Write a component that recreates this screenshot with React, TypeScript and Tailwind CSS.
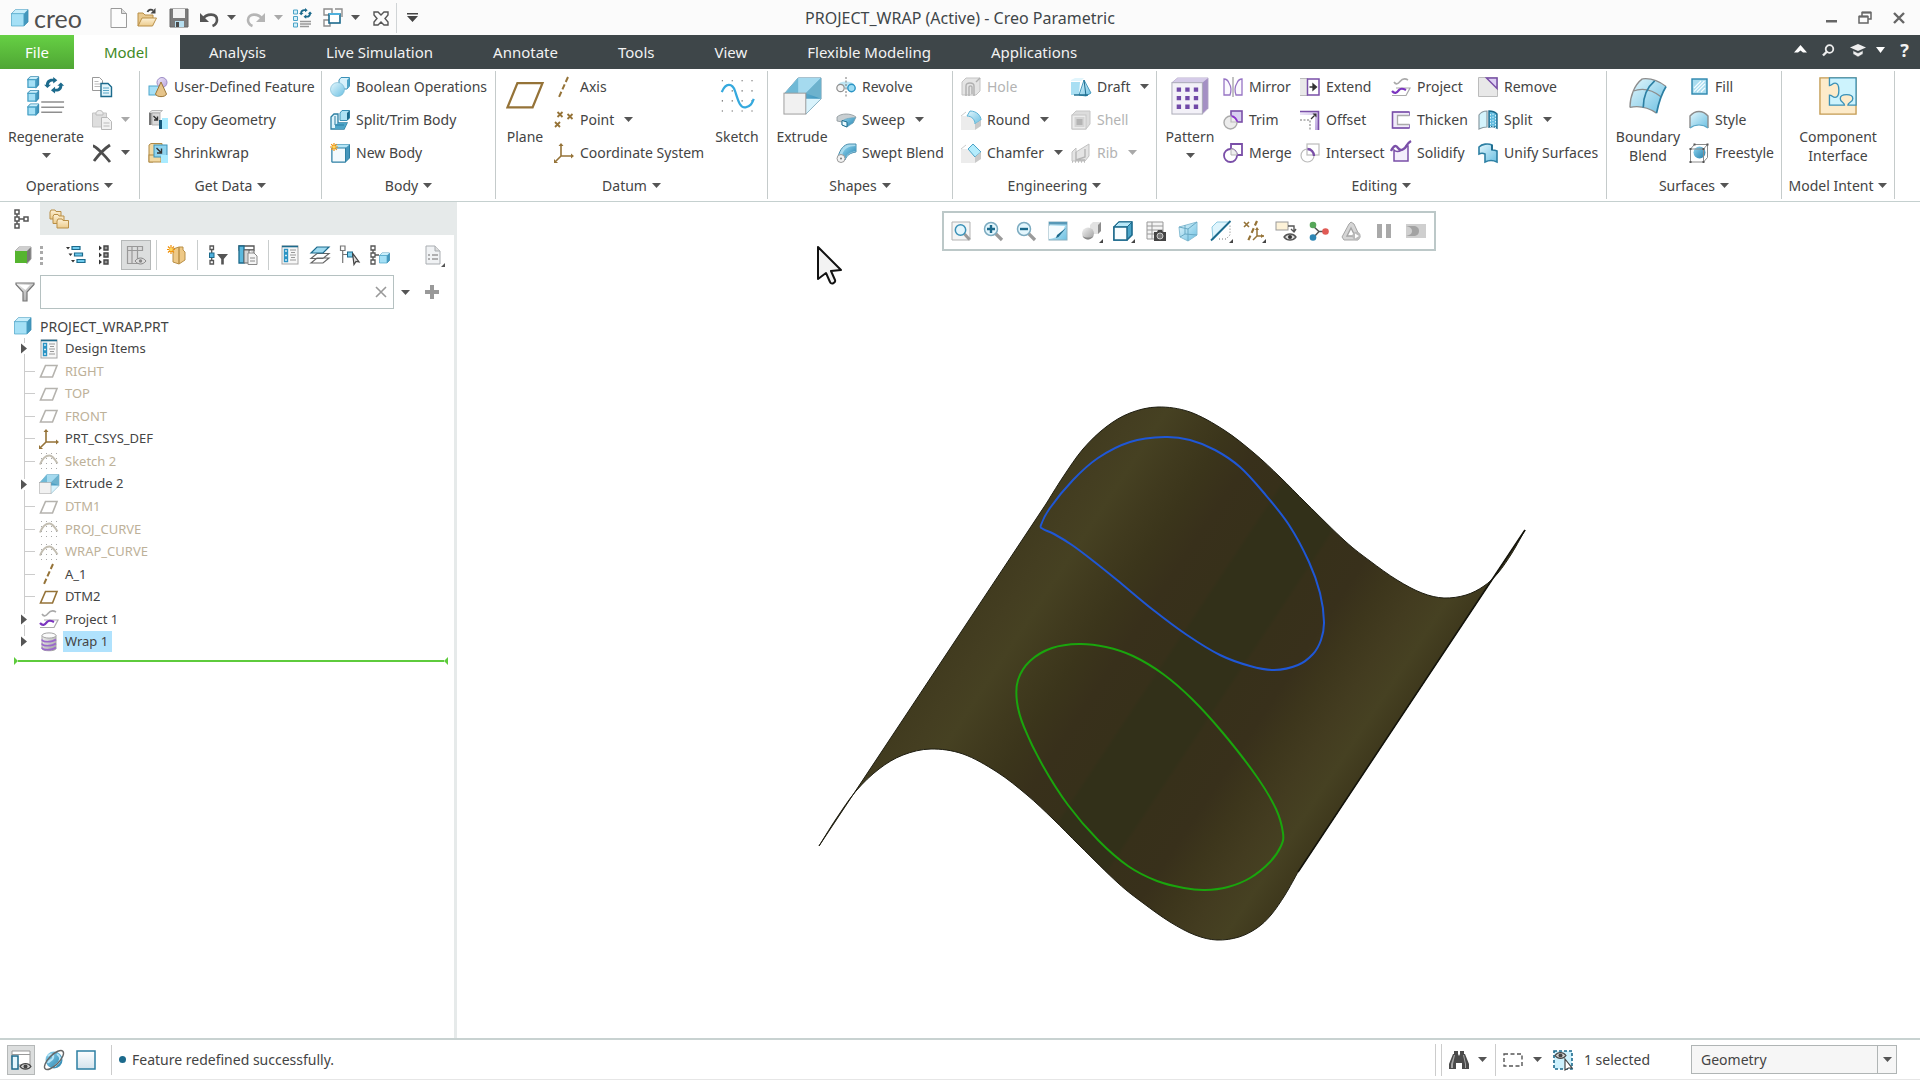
import type { ReactNode } from "react";

type Point = [number, number];

// Catmull-Rom spline through the points, written out as cubic segments
function smooth(points: Point[], closed = false) {
  const n = points.length;
  const at = (i: number) =>
    closed ? points[(i + n) % n] : points[Math.max(0, Math.min(n - 1, i))];
  let d = `M${points[0][0]} ${points[0][1]}`;
  const last = closed ? n : n - 1;
  for (let i = 0; i < last; i++) {
    const [p0, p1, p2, p3] = [at(i - 1), at(i), at(i + 1), at(i + 2)];
    d += `C${p1[0] + (p2[0] - p0[0]) / 6} ${p1[1] + (p2[1] - p0[1]) / 6} ${p2[0] - (p3[0] - p1[0]) / 6} ${p2[1] - (p3[1] - p1[1]) / 6} ${p2[0]} ${p2[1]}`;
  }
  return closed ? d + "Z" : d;
}

// the extruded profile, and the same profile at the far end of the extrusion
const nearEdge: Point[] = [
  [819, 846], [836, 819], [856, 791], [879, 769], [903, 755], [931, 749], [963, 754], [997, 772],
  [1027, 795], [1053, 819], [1080, 846], [1118, 883], [1143, 903], [1170, 922], [1195, 935],
  [1217, 940], [1239, 937], [1257, 928], [1271, 915], [1285, 895], [1298, 872],
];
const farEdge = nearEdge.map(([x, y]): Point => [x + 227, y - 342]);
const surface = smooth(farEdge) + smooth([...nearEdge].reverse()).replace("M", "L") + "Z";

const projectedCurve: Point[] = [
  [1041, 525], [1050, 508], [1073, 480], [1098, 458], [1130, 442], [1165, 437], [1190, 440],
  [1215, 450], [1240, 467], [1264, 493], [1289, 525], [1309, 562], [1320, 593], [1324, 622],
  [1321, 640], [1313, 654], [1298, 665], [1274, 670], [1250, 666], [1220, 655], [1187, 635],
  [1152, 609], [1117, 580], [1092, 560], [1072, 545], [1054, 534], [1043, 529],
];

const wrappedCurve: Point[] = [
  [1079, 644], [1052, 648], [1030, 661], [1018, 680], [1017, 702], [1024, 727], [1043, 766],
  [1068, 805], [1098, 840], [1128, 866], [1157, 881], [1184, 888], [1205, 890], [1228, 887],
  [1250, 878], [1270, 862], [1281, 846], [1283, 833], [1276, 809], [1257, 777], [1223, 733],
  [1192, 699], [1163, 674], [1133, 656], [1106, 647],
];

/* ---------- icons ---------- */

const teal = "#1c6a8c";
const gold = "#957338";
const purple = "#7a4fa8";

function Gradients() {
  return (
    <svg width="0" height="0" className="absolute" aria-hidden="true">
      <defs>
        <linearGradient id="blue" x1="0" y1="0" x2="1" y2="1">
          <stop offset="0" stopColor="#e4f7fd" />
          <stop offset="1" stopColor="#6cc0e2" />
        </linearGradient>
        <linearGradient id="deep" x1="0" y1="0" x2="1" y2="1">
          <stop offset="0" stopColor="#8fd6f2" />
          <stop offset="1" stopColor="#2580ab" />
        </linearGradient>
        <linearGradient id="gray" x1="0" y1="0" x2="1" y2="1">
          <stop offset="0" stopColor="#f4f4f4" />
          <stop offset="1" stopColor="#9d9d9d" />
        </linearGradient>
        <linearGradient id="violet" x1="0" y1="0" x2="1" y2="1">
          <stop offset="0" stopColor="#f1ebfa" />
          <stop offset="1" stopColor="#b9a3dc" />
        </linearGradient>
        <linearGradient id="tan" x1="0" y1="0" x2="0" y2="1">
          <stop offset="0" stopColor="#fdf1d6" />
          <stop offset="1" stopColor="#eccb8c" />
        </linearGradient>
        <linearGradient id="paper" x1="0" y1="0" x2="0" y2="1">
          <stop offset="0" stopColor="#fdfeff" />
          <stop offset="1" stopColor="#d3e3ec" />
        </linearGradient>
      </defs>
    </svg>
  );
}

function Cube({ x, y, s }: { x: number; y: number; s: number }) {
  const k = s / 4;
  return (
    <g strokeLinejoin="round">
      <path d={`M${x} ${y + k}l${k} ${-k}h${s - k}v${s - k}l${-k} ${k}z`} fill="#4397bd" stroke="#3b8db3" strokeWidth=".8" />
      <path d={`M${x} ${y + k}l${k} ${-k}h${s - k}l${-k} ${k}z`} fill="#c8eefb" />
      <rect x={x} y={y + k} width={s - k} height={s - k} fill="#a5e0f6" stroke="#4ba3c7" strokeWidth=".7" />
    </g>
  );
}

const cycle = (
  <g fill={teal}>
    <path d="M2 8.500C2 4.500 5 2 8.500 2H10V0l4.500 3.600L10 7.200V5H9C6.800 5 5.500 6.500 5.200 8.500H7.500L3.600 12 0 8.500z" />
    <path d="M20 9.500c0 4-3 6.500-6.500 6.500H12v2l-4.500-3.600L12 10.800V13h1c2.200 0 3.500-1.500 3.800-3.500h-2.300L18.400 6 22 9.500z" />
  </g>
);

const planeShape = (color: string) => (
  <path d="M6.500 4.500h11.500l-4.500 11.500H1.500z" fill="none" stroke={color} strokeWidth="1.600" />
);

const sketchFaded = (
  <>
    <path d="M1 13.500c3-7.500 7-9 9.500-9s5 3 8 8" fill="none" stroke="#c3beb2" strokeWidth="2" />
    <path d="M2 2.500h16M2 7.500h16M2 12.500h16M2 17.500h16" fill="none" stroke="#a9a9a9" strokeWidth="1" strokeDasharray="1 4" />
  </>
);

const extrudeShape = (
  <>
    <path d="M1 8.500L8 .500h12v11L12 19.500V8.500z" fill="url(#deep)" stroke="#5f8ea5" strokeWidth=".5" />
    <path d="M1 8.500L8 .500h12l-8 8z" fill="#a5daef" />
    <path d="M1 8.500L8 .500v8z" fill="#6fb9d6" />
    <path d="M12 8.500l8-8v11z" fill="#6db2cd" />
    <path d="M12 19.500l8-8h-8z" fill="#d9f3fc" />
    <rect x=".5" y="8.500" width="11.500" height="11" fill="#f1f1f1" stroke="#9b9b9b" strokeWidth=".5" />
  </>
);

const projectShape = (
  <>
    <path d="M3 5c2 3 4 2 6-.500s4-4 8-1.500" fill="none" stroke="#aaa" strokeWidth="1.600" />
    <path d="M5 11h14l-4 7.500H1" fill="none" stroke="#aaa" strokeWidth="1.200" />
    <path d="M1 14c3 3.500 5 1.500 7-1s5-1 7 0" fill="none" stroke="#7b35bf" strokeWidth="2.200" />
  </>
);

const csysShape = (
  <>
    <path d="M7 2v11h11M7 13l-5 5" fill="none" stroke={gold} strokeWidth="1.600" />
    <path d="M7 0l2.500 3h-5zM20 13l-3 2.500v-5zM0 20v-4l4 4z" fill={gold} />
  </>
);

const listShape = (
  <>
    <rect x="2" y="1" width="16" height="18" fill="#f7f7f7" stroke="#a5a5a5" />
    <path d="M2 1.500h16" stroke={teal} strokeWidth="1.600" />
    <path d="M4.500 4.500h3v3h-3zM4.500 9h3v3h-3zM4.500 13.500h3v3h-3z" fill="#fff" stroke="#2b94c4" strokeWidth="1.400" />
    <path d="M10 5h6M11 7.500h4M10 10h6M11 12.500h4M10 15h6" stroke="#999" strokeWidth="1" />
  </>
);

const icons: Record<string, ReactNode> = {
  new: (
    <>
      <path d="M2 .500h10.500l5 5v14H2z" fill="#fcfcfc" stroke="#9a9a9a" />
      <path d="M12.500.500v5h5" fill="#ddd" stroke="#9a9a9a" />
    </>
  ),
  open: (
    <>
      <path d="M1 18V5h5l2 2h8v4" fill="#e9c98e" stroke="#b98f47" />
      <path d="M1 18l4-8h14.500l-4 8z" fill="url(#tan)" stroke="#b98f47" />
      <path d="M10.500 4c1-2.500 4-3 5.500-1.500" fill="none" stroke="#444" strokeWidth="1.800" />
      <path d="M18.500 0v5.500h-5z" fill="#444" />
    </>
  ),
  save: (
    <>
      <path d="M1 1h18v18H1z" fill="#7b7b7b" stroke="#666" />
      <path d="M4 1h12v9H4z" fill="#f3f3f3" />
      <path d="M6 13h9v6H6z" fill="#b7dff0" />
      <path d="M7 14h3v5H7z" fill="#4b4b4b" />
    </>
  ),
  undo: (
    <>
      <path d="M4 11c3-5.500 14-6.500 14 1 0 3-2 5-4.500 6" fill="none" stroke="#555" strokeWidth="2.600" />
      <path d="M1 5v9h9z" fill="#555" />
    </>
  ),
  redo: (
    <>
      <path d="M16 11C13 5.500 2 4.500 2 12c0 3 2 5 4.500 6" fill="none" stroke="#b5b5b5" strokeWidth="2.600" />
      <path d="M19 5v9h-9z" fill="#b5b5b5" />
    </>
  ),
  regenSmall: (
    <>
      <path d="M1.500 2h4v4h-4zM1.500 8.500h4v4h-4zM1.500 15h4v4h-4z" fill="#d5f1fb" stroke="#4ba3c7" />
      <g transform="translate(7 0) scale(.6)">{cycle}</g>
      <path d="M8 13.500h11M8 16h11M8 18.500h9" stroke="#999" strokeWidth="1.300" />
    </>
  ),
  windows: (
    <>
      <path d="M1 1h8v6H1zM12 1h7v8M1 12h6v6H1z" fill="#fff" stroke="#8d8d8d" strokeWidth="1.400" />
      <rect x="6" y="6" width="11" height="9" fill="#fff" stroke={teal} strokeWidth="1.600" />
      <path d="M6 6h11" stroke="#4fb0dd" strokeWidth="2" />
    </>
  ),
  closeWin: (
    <path d="M3 4h4l3 3 3-3h4v3l-3 3.500 3 3.500v3h-4l-3-3-3 3H3v-3l3-3.500L3 7z" fill="none" stroke="#555" strokeWidth="1.400" />
  ),
  copy: (
    <>
      <path d="M.500.500h7l3 3v10H.500z" fill="#fff" stroke="#999" />
      <path d="M2.500 4.500h4M2.500 7h6M2.500 9.500h6" stroke="#bbb" />
      <path d="M9 6.500h7l3.500 3.500v9.500H9z" fill="#e3f5fb" stroke={teal} strokeWidth="1.400" />
      <path d="M11 11h6M11 13.500h6M11 16h6" stroke="#5aa6c6" />
    </>
  ),
  paste: (
    <>
      <path d="M.500 3h14v14H.500z" fill="#dedede" stroke="#c5c5c5" />
      <path d="M4 3.500c0-2 1.500-3 3.500-3s3.500 1 3.500 3v1.500H4z" fill="#ececec" stroke="#bbb" />
      <path d="M9.500 7.500h6l4 4v8h-10z" fill="#f2f2f2" stroke="#b8b8b8" />
      <path d="M11.500 13h6M11.500 16h6" stroke="#bbb" />
    </>
  ),
  delete: <path d="M1 3c3 0 13 11 17 16M2 18C5 14 12 6 18 2" fill="none" stroke="#4d4d4d" strokeWidth="2.800" />,
  udf: (
    <>
      <rect x="1" y="9" width="11" height="9" fill="#a6e0f7" stroke="#4fa6cb" />
      <circle cx="14" cy="5.500" r="5" fill="url(#violet)" stroke="#9c8cc6" />
      <path d="M13 5l5.500 12c-1 3.500-10 3.500-11 0z" fill="#e6c48a" stroke="#9b7637" />
    </>
  ),
  copyGeom: (
    <>
      <path d="M1 3l3-2.500h10.500l-3 2.500z" fill="#eee" stroke="#aaa" strokeWidth=".8" />
      <path d="M4 3h8v12H4z" fill="#d9d9d9" stroke="#a6a6a6" strokeWidth=".8" />
      <path d="M1 3h2.500v12H1z" fill="#777" />
      <path d="M5.500 6l4 4M9.500 6.500V10H6" stroke="#333" strokeWidth="1.400" fill="none" />
      <path d="M11 10h3v9h-3z" fill="#16587a" />
      <path d="M14 8h6v11h-6z" fill="#a9ebff" />
    </>
  ),
  shrinkwrap: (
    <>
      <path d="M1 2l2-1.500h11V3H7v14l-2 2H1z" fill="#f2d9a3" stroke="#b08a45" />
      <rect x="1" y="12" width="12" height="7" fill="#f2d9a3" stroke="#b08a45" />
      <rect x="6" y="2" width="13" height="12" fill="#8fd3ee" stroke="#3b91b7" />
      <path d="M8.500 5l4.500 4.500M13.500 5.500V10H9" stroke="#333" strokeWidth="1.400" fill="none" />
      <path d="M13 12h7v8h-7z" fill="#a9ebff" />
    </>
  ),
  boolean: (
    <>
      <path d="M9 3l2-2.500h8.500V9L17 12H9z" fill="#d6f1fb" stroke="#3b91b7" />
      <path d="M17 3l2.500-2.500V9L17 12z" fill="#4ea5c8" />
      <circle cx="7.500" cy="12.500" r="7" fill="url(#blue)" stroke="#6fb4cf" strokeWidth=".6" />
    </>
  ),
  splitBody: (
    <>
      <path d="M10 3l2-2.500h7.500V8L17 10.500h-7z" fill="#aee2f5" stroke="#3b91b7" />
      <path d="M17 3l2.500-2.500V8L17 10.500z" fill={teal} />
      <path d="M1 7l3-3h4v9h9l-3 6H1z" fill="#dff4fb" stroke="#2c7fa3" strokeWidth="1.300" />
      <path d="M5 15l3-2h9l-3 6H5z" fill="#4ea5c8" />
      <path d="M5 6v9h9" fill="none" stroke="#2c7fa3" />
    </>
  ),
  newBody: (
    <>
      <path d="M2 5l4-3.500h13.500V15L15.500 19H2z" fill="#4496bc" stroke="#2c7fa3" />
      <path d="M2 5l4-3.500h13.500L15.500 5z" fill="#b5e5f6" />
      <rect x="2" y="5" width="13.500" height="14" fill="#f3fafd" stroke="#2c7fa3" />
      <path d="M4 0v8M0 4h8M1.200 1.200l5.600 5.600M6.800 1.200L1.200 6.800" stroke="#f0920e" strokeWidth="1.200" />
      <circle cx="4" cy="4" r="1.600" fill="#ffd75a" />
    </>
  ),
  plane: planeShape(gold),
  planeFaded: planeShape("#b5b3ae"),
  axis: <path d="M14 0L5 20" stroke={gold} strokeWidth="2" strokeDasharray="5.500 2.600" />,
  point: (
    <path d="M3.500 2l5 5m0-5l-5 5M13.500 4l5 5m0-5l-5 5M1 12l5 5m0-5l-5 5" stroke={gold} strokeWidth="1.800" />
  ),
  csys: csysShape,
  revolve: (
    <>
      <ellipse cx="10" cy="8" rx="8" ry="3.500" fill="#bfe5f3" />
      <path d="M10 0v20" stroke="#777" strokeDasharray="2 1.500" />
      <circle cx="4.500" cy="11" r="3.700" fill="#f4f4f4" stroke="#8f8f8f" strokeWidth="1.200" />
      <circle cx="15.500" cy="11" r="3.700" fill="#9ddcf3" stroke="#2b94c4" strokeWidth="1.400" />
    </>
  ),
  sweep: (
    <>
      <path d="M1 7c4-4 14-4 19 0l-3 6h-5V9L6 12 1 11z" fill="#c9cfd2" stroke="#8b9599" strokeWidth=".8" />
      <path d="M6 11c4-3 9-3 13.500-3.500L17 13l-6 4-5-2z" fill="url(#deep)" stroke="#6aa3ba" strokeWidth=".6" />
      <path d="M6 10.500l5 1.500v5l-5-2z" fill="#eafaff" stroke={teal} />
    </>
  ),
  sweptBlend: (
    <>
      <path d="M2 14C4 6 8 1.500 13 1h7v8c-6 1-9 3-11 8z" fill="#a9dbee" stroke="#4b8fae" />
      <path d="M6 12c2-6 6-9 14-9v5c-6 1-9 3-11 8z" fill="url(#deep)" />
      <circle cx="5" cy="15.500" r="4" fill="#f2f2f2" stroke="#9a9a9a" />
      <circle cx="5" cy="15.500" r="1" fill="#777" />
    </>
  ),
  hole: (
    <>
      <path d="M1 5l4-4h14v13l-4 4H1z" fill="#e4e4e4" stroke="#c3c3c3" />
      <path d="M5 19V9c0-4 8-4 8 0v10M8 19v-9c0-1.500 3-1.500 3 0v7M15 5l4-4" fill="none" stroke="#b0b0b0" strokeWidth="1.400" />
    </>
  ),
  round: (
    <>
      <path d="M0 6h6c5 0 8 4 8 8v6H0z" fill="#ececec" />
      <path d="M0 6l5-4" stroke="#ccc" />
      <path d="M6 6l3-5c7 0 11 5 11 9l-6 4c0-4-3-8-8-8z" fill="url(#blue)" stroke="#5cb3d6" />
      <path d="M14 14l6-4v6l-6 4z" fill="#c9c9c9" />
    </>
  ),
  chamfer: (
    <>
      <path d="M0 6h6l8 8v6H0z" fill="#ececec" />
      <path d="M0 6l5-4" stroke="#ccc" />
      <path d="M7 6l5-5 8 8-6 5z" fill="#b4ecfc" stroke="#4ba3c7" />
      <path d="M14 14l6-5v7l-6 4z" fill="#c9c9c9" />
    </>
  ),
  draft: (
    <>
      <path d="M0 3l4-2h9l-3 3H0z" fill="#e1f5fc" />
      <path d="M0 5h9l-1 13H0z" fill="#a9dff3" />
      <path d="M8 18l5-15 7 13-5 3z" fill="url(#blue)" stroke="#4a9cbf" />
      <path d="M3 18h14" stroke={teal} strokeWidth="1.400" />
      <path d="M13 3l2 16" stroke={teal} />
    </>
  ),
  shell: (
    <>
      <path d="M1 5l4-4h14v13l-4 5H1z" fill="#dcdcdc" stroke="#c6c6c6" />
      <rect x="1" y="5" width="14" height="14" fill="#ececec" stroke="#c6c6c6" />
      <rect x="4.500" y="8" width="8" height="8" fill="#b4b4b4" stroke="#d4d4d4" strokeWidth="2" />
    </>
  ),
  rib: (
    <>
      <path d="M1 18V9l4-4v4l13-8v12l-4 5z" fill="#e4e4e4" stroke="#c1c1c1" />
      <path d="M5 9v8l9-3V6M5 17h9" fill="none" stroke="#b5b5b5" strokeWidth="1.400" />
      <path d="M1 19h14" stroke="#999" strokeDasharray="1 2" />
    </>
  ),
  mirror: (
    <>
      <path d="M10 0v20" stroke="#999" strokeWidth="1.200" />
      <path d="M1 2v16h6c1-3 1.500-8-1-12C5 3.500 3.500 2 1 2zM19 2v16h-6c-1-3-1.500-8 1-12 1-2.500 2.500-4 5-4z" fill="#fbf9fe" stroke="#9774c4" strokeWidth="1.300" />
    </>
  ),
  trim: (
    <>
      <rect x="8" y="1" width="11" height="11" fill="#d9cff0" stroke={purple} strokeWidth="1.600" />
      <circle cx="7.500" cy="12.500" r="6.500" fill="#ececec" stroke="#aaa" strokeWidth="1.400" />
      <path d="M8 6.200c3.500 0 6 3 6 5.800" fill="none" stroke="#8c30d0" strokeWidth="1.800" />
      <path d="M8 6v6h6" fill="none" stroke="#bbb" strokeWidth="1.200" />
    </>
  ),
  merge: (
    <>
      <path d="M8 6V1h11v11h-5" fill="none" stroke={purple} strokeWidth="1.800" />
      <circle cx="7.500" cy="12.500" r="6.500" fill="none" stroke={purple} strokeWidth="1.800" />
      <path d="M8 6v6h6c0-3-2.500-6-6-6z" fill="#eee" stroke="#b5b5b5" />
    </>
  ),
  intersect: (
    <>
      <rect x="7" y="1" width="12" height="11" fill="none" stroke="#bbb" strokeWidth="1.200" />
      <circle cx="7.500" cy="12.500" r="6.500" fill="none" stroke="#bbb" strokeWidth="1.200" />
      <path d="M7.500 6c3.500 0 6.500 3 6.500 7" fill="none" stroke={purple} strokeWidth="2.400" />
    </>
  ),
  extend: (
    <>
      <rect x="0" y="1" width="7" height="18" fill="#e9e9e9" />
      <path d="M0 1.500h8M0 18.500h8" stroke="#bbb" />
      <path d="M7.500 2h11.500v16H7.500z" fill="#fff" stroke={purple} strokeWidth="1.500" />
      <path d="M9.500 10h6M13 7l3.500 3-3.500 3z" stroke="#333" fill="#333" strokeWidth="1.300" />
    </>
  ),
  offset: (
    <>
      <path d="M0 1h19v19h-4V5H0z" fill="url(#violet)" />
      <path d="M0 1.500h18.500V20" fill="none" stroke={purple} strokeWidth="1.600" />
      <path d="M0 10h10v10" fill="none" stroke="#777" strokeDasharray="2 1.500" />
      <path d="M11 9l3.500-3.500" stroke="#333" strokeWidth="1.300" />
      <path d="M16.500 3.500v4l-4-4z" fill="#333" />
    </>
  ),
  project: projectShape,
  thicken: (
    <>
      <path d="M1.500 2h17v3.500h-12v9h12V18h-17z" fill="#f1ebfa" stroke="#9774c4" />
      <path d="M18.500 2h-17v16h17" fill="none" stroke={purple} strokeWidth="1.600" />
      <path d="M18.500 5.500h-12v9h12" fill="none" stroke="#aaa" strokeWidth="1.300" />
    </>
  ),
  solidify: (
    <>
      <path d="M3 7c3 3 6 1 8 0s3-4 6-4v15H3z" fill="#f3eefb" stroke={purple} strokeWidth="1.500" />
      <path d="M0 8c3-6 5-6 7-3s5 2 7 0 1-4 6-7" fill="none" stroke={purple} strokeWidth="2.400" />
    </>
  ),
  remove: (
    <>
      <path d="M.500.500h19v19H.500z" fill="#e8e8e8" stroke="#bcbcbc" />
      <path d="M8.500 1h10.500v10.500z" fill="#ddd0f3" stroke={purple} strokeWidth="1.500" />
    </>
  ),
  split: (
    <>
      <path d="M1 5c2-3 5-4 8-4v16c-3 0-6 1-8 2z" fill="#d4f4fd" stroke="#8a9ba3" strokeWidth="1.200" />
      <path d="M11 1c3 0 6 1 8 3v14c-2-1-5-2-8-1z" fill="#5fb9dd" stroke={teal} strokeWidth="1.400" />
      <path d="M12.500 4v13M15 3.500v14M17.500 5v13" stroke="#d4f4fd" strokeDasharray="1.500 1.500" />
    </>
  ),
  unify: (
    <>
      <path d="M1 4c3-3 9-4 13-2v5c2 0 3 0 5 1v11c-4-2-8-2-12 0v-8c-2-1-4-1-6 0z" fill="url(#blue)" stroke="#2c7fa3" strokeWidth="1.600" />
      <path d="M14 2v5" stroke={teal} strokeWidth="1.800" />
    </>
  ),
  fill: (
    <>
      <rect x="3" y="2" width="15" height="15" fill="#a9dcef" stroke="#2b85ad" strokeWidth="1.400" />
      <path d="M5 11l7-7M5 14.500L15.500 4M8 15l8-8M12 15l4-4" stroke="#f4fcff" strokeWidth="1.200" />
    </>
  ),
  style: (
    <>
      <path d="M1 6c5-6 13-6 18 0v12c-5-4-13-4-18 0z" fill="url(#blue)" />
      <path d="M1 18V6c5-6 13-6 18 0v12" fill="none" stroke="#8c8c8c" strokeWidth="1.400" />
      <path d="M1 18c5-4 13-4 18 0" fill="none" stroke="#5aa6c6" strokeWidth="1.200" />
    </>
  ),
  freestyle: (
    <>
      <circle cx="10.500" cy="9.500" r="6" fill="url(#deep)" />
      <path d="M1.500 6h13v13h-13zM1.500 6l4-4.500h13v13l-4 4.500M14.500 6l4-4.500" fill="none" stroke="#8b8b8b" />
      <path d="M.500 5h2v2h-2zM13.500 5h2v2h-2zM.500 18h2v2h-2zM13.500 18h2v2h-2zM4.500.500h2v2h-2zM17.500.500h2v2h-2z" fill="#555" />
    </>
  ),
  part: <Cube x={1.500} y={1.500} s={16.500} />,
  design: listShape,
  sketchFaded,
  extrudeSmall: extrudeShape,
  wrap: (
    <>
      <path d="M3 3.500v13c0 3 14 3 14 0v-13" fill="url(#gray)" stroke="#a5a5a5" />
      <ellipse cx="10" cy="3.500" rx="7" ry="2.600" fill="#fafafa" stroke="#a5a5a5" />
      <path d="M3 7.500c0 3 10 3 14 0M3 11.500c0 3 10 3 14 0M3 15.500c0 3 10 3 14 0" fill="none" stroke="#9a68cc" strokeWidth="1.700" />
    </>
  ),
  // model tree toolbar
  tree: (
    <path d="M5 1h4v4H5zM5 8h4v4H5zM5 15h4v4H5zM14 8h4v4h-4zM7 5v3M7 12v3M9 10h5" fill="none" stroke="#555" strokeWidth="1.500" />
  ),
  folders: (
    <g fill="url(#tan)" stroke="#b98f47">
      <path d="M1 3l1-2h4l1 1.500h5V10H1z" />
      <path d="M4 7.500l1-2h4L10 7h5v7.500H4z" />
      <path d="M8 12l1-2h4l1 1.500h5.500V19H8z" />
    </g>
  ),
  greenCube: (
    <>
      <path d="M2 6l4-4h12v12l-4 4.500z" fill="#777" stroke="#999" />
      <path d="M2 6l4-4h12l-4 4z" fill="#cfcfcf" />
      <rect x="2" y="6" width="12" height="12" fill="#55b42f" />
    </>
  ),
  levels: (
    <>
      <path d="M6 1.500h8v3H6zM8.500 8h8v3h-8zM11 14.500h8v3h-8z" fill="#6fcbee" stroke={teal} strokeWidth="1.200" />
      <path d="M0 2h4L2 4.500zM2.500 8.500h4l-2 2.500zM5 15h4l-2 2.500z" fill="#333" />
    </>
  ),
  flat: (
    <>
      <path d="M8 1h4v4H8zM8 8h4v4H8zM8 15h4v4H8z" fill="#999" stroke="#444" strokeWidth="1.400" />
      <path d="M3 .500L6 3 3 5.500zM3 7.500L6 10l-3 2.500zM3 14.500L6 17l-3 2.500z" fill="#333" />
    </>
  ),
  columns: (
    <>
      <path d="M1.500 1.500h15v4h-15zM1.500 5.500h4.500v13H1.500zM6 1.500v17h5.500v-17" fill="#dadada" stroke="#999" strokeWidth="1.200" />
      <path d="M9 16c3-4 8-4 11 0-3 4-8 4-11 0z" fill="#ddd" stroke="#888" />
      <circle cx="14.500" cy="16" r="1.700" fill="#888" />
    </>
  ),
  newFolder: (
    <>
      <path d="M6 4l6-2v17l-6-2zM12 2h4v3l2 2v8l-6 4z" fill="#eec987" stroke="#b98f47" />
      <path d="M4 0v9M0 4.500h8M1 1.500l6 6M7 1.500l-6 6" stroke="#f0920e" strokeWidth="1.200" />
      <circle cx="4" cy="4.500" r="1.800" fill="#ffd75a" />
    </>
  ),
  treeFilter: (
    <>
      <path d="M2 1h3.500v3.500H2zM2 15.500h3.500V19H2zM3.700 4.500v11" fill="none" stroke="#555" strokeWidth="1.300" />
      <rect x="1.500" y="8" width="4.500" height="4.500" fill="#4fb0dd" stroke={teal} />
      <path d="M9 9h11l-4.200 5v5.500h-2.600V14z" fill="#555" />
    </>
  ),
  treeColumns: (
    <>
      <path d="M1 1h15v4H1z" fill="#fff" stroke="#555" strokeWidth="1.300" />
      <path d="M1 1h5v17H1z" fill="#5bb8dd" stroke={teal} strokeWidth="1.300" />
      <path d="M6 5h5v13H6zM11 5h5v4" fill="#d5d5d5" stroke="#666" />
      <path d="M10 8h6l3 3v8.500h-9z" fill="#f5f5f5" stroke="#888" />
      <path d="M12 13h5M12 16h5" stroke="#888" />
    </>
  ),
  layers: (
    <>
      <path d="M1 18l6-5h12l-6 5zM1 13.500l6-5h12l-6 5z" fill="#fff" stroke="#666" strokeWidth="1.200" />
      <path d="M1 8l6-6h12l-6 6z" fill="#9fdaf0" stroke={teal} strokeWidth="1.200" />
    </>
  ),
  treeSelect: (
    <>
      <path d="M.500 1h4.500v4.500H.500zM2.700 5.500V18M2.700 9.500h5" fill="none" stroke="#777" strokeWidth="1.200" />
      <rect x="7.500" y="7" width="5" height="5" fill="#7dd0ee" stroke={teal} />
      <path d="M12.500 8l6.500 9-3-.500-2 3z" fill="#ddd" stroke="#444" strokeWidth="1.200" />
    </>
  ),
  treeBody: (
    <>
      <path d="M1 1h4v4H1zM1 8h4v4H1zM1 15h4v4H1zM3 5v3M3 12v3M5 10h4" fill="none" stroke="#555" strokeWidth="1.300" />
      <Cube x={9.500} y={8} s={10} />
    </>
  ),
  report: (
    <>
      <path d="M2 1h9l5 5v13H2z" fill="#f0f2f4" stroke="#a9adb1" />
      <path d="M11 1v5h5" fill="#ddd" stroke="#a9adb1" />
      <path d="M4 10h2M4 14h2M8 10h6M8 14h6" stroke="#999" strokeWidth="1.300" />
      <path d="M21 18v4h-4z" fill="#555" />
    </>
  ),
  funnel: (
    <>
      <path d="M1 1h18v1.500L12 10v9H8v-9L1 2.500z" fill="url(#gray)" stroke="#777" strokeWidth="1.200" />
      <path d="M4 3h11l-4.500 5z" fill="#fff" />
    </>
  ),
  // graphics toolbar
  refit: (
    <>
      <path d="M1 1h18v18H1z" fill="#f5f5f5" stroke="#b3b3b3" />
      <path d="M13.500 13l5 5.500" stroke="#9a9a9a" strokeWidth="3" />
      <circle cx="9.500" cy="9" r="5.200" fill="#e3f6fd" stroke="#3b91b7" strokeWidth="1.500" />
    </>
  ),
  zoomIn: (
    <>
      <path d="M12 12l7 7" stroke="#9a9a9a" strokeWidth="3.200" />
      <circle cx="8" cy="8" r="6.500" fill="#e3f6fd" stroke="#7cabc0" strokeWidth="1.500" />
      <path d="M4 8h8M8 4v8" stroke={teal} strokeWidth="2.400" />
    </>
  ),
  zoomOut: (
    <>
      <path d="M12 12l7 7" stroke="#9a9a9a" strokeWidth="3.200" />
      <circle cx="8" cy="8" r="6.500" fill="#e3f6fd" stroke="#7cabc0" strokeWidth="1.500" />
      <path d="M4 8h8" stroke={teal} strokeWidth="2.400" />
    </>
  ),
  repaint: (
    <>
      <rect x="1" y="1" width="18" height="18" fill="url(#blue)" stroke="#8ab0c0" />
      <path d="M1 1h18v2.500H1z" fill="#5799b8" />
      <path d="M1 5h16c-3 9-8 12-16 13z" fill="#f5fcff" />
      <path d="M18 7l-7.500 9-2.500 1 1-3z" fill={teal} />
    </>
  ),
  render: (
    <>
      <path d="M9 4l3-3h8v9l-3 3H9z" fill="#e2e2e2" />
      <path d="M17 4l3-3v9l-3 3z" fill="#8c8c8c" />
      <circle cx="7" cy="12.500" r="6" fill="url(#gray)" />
      <path d="M1.500 15c2 4 8 5 11 0-3 2-8 2-11 0z" fill="#888" />
      <path d="M22 18v4h-4z" fill="#444" />
    </>
  ),
  display: (
    <>
      <path d="M1 6l5-5h13v13l-5 5H1z" fill="#4ba5c9" stroke={teal} strokeWidth="1.600" />
      <path d="M1 6l5-5h13l-5 5z" fill="#b8e8f8" stroke={teal} />
      <rect x="1" y="6" width="13" height="13" fill="#f8fdff" stroke={teal} strokeWidth="1.500" />
      <path d="M22 18v4h-4z" fill="#444" />
    </>
  ),
  savedViews: (
    <>
      <path d="M1 1h16v17H1z" fill="#f4f4f4" stroke="#999" />
      <path d="M1 5h16M1 9h16M1 13h9M6 1v17" stroke="#999" />
      <path d="M8 11h3l1-2h4l1 2h3v9H8z" fill="#444" />
      <circle cx="14" cy="15" r="3" fill="#777" stroke="#ccc" />
    </>
  ),
  perspective: (
    <>
      <path d="M1 6L19 1v13l-9 6-8-4z" fill="url(#blue)" stroke="#8abfd5" />
      <path d="M1 6l9 2v12M10 8l9-7M7 4v9l-5 3M7 13l12 1" fill="none" stroke="#69a9c4" />
    </>
  ),
  section: (
    <>
      <path d="M1 6l5-5h13L2 19z" fill="#dff5fd" stroke="#8fcbe2" />
      <path d="M8 18h7l4-4V4" fill="none" stroke="#777" strokeDasharray="1 2" />
      <path d="M0 19.500L19.500 0" stroke={teal} strokeWidth="1.800" />
      <path d="M22 18v4h-4z" fill="#444" />
    </>
  ),
  datumDisplay: (
    <>
      <path d="M0 1l5 5m0-5L0 6" stroke={gold} strokeWidth="1.600" />
      <path d="M13 0L4 20" stroke={gold} strokeWidth="2.200" strokeDasharray="5 3" />
      <path d="M13 8v7h7M13 15l-4 4" fill="none" stroke={gold} strokeWidth="1.500" />
      <path d="M13 6l2 3h-4zM20 15l-3 2v-4z" fill={gold} />
      <path d="M22 18v4h-4z" fill="#444" />
    </>
  ),
  annotation: (
    <>
      <rect x="0" y="1" width="12" height="8" fill="#fdf2d8" stroke="#999" />
      <path d="M12 5h6v6M15 8l3 3 2-3" fill="none" stroke="#555" strokeWidth="1.400" />
      <path d="M8 16c3-4 9-4 12 0-3 4-9 4-12 0z" fill="#ddd" stroke="#555" strokeWidth="1.300" />
      <circle cx="14" cy="16" r="2" fill="#333" />
    </>
  ),
  spin: (
    <>
      <path d="M4 5l6 5.500h6M10 10.500L4 17" fill="none" stroke="#555" strokeWidth="1.500" />
      <circle cx="4" cy="4" r="3.300" fill="#57a75a" />
      <circle cx="4" cy="16.500" r="3.300" fill="#2e86b4" />
      <circle cx="16.500" cy="10.500" r="3.300" fill="#e05a55" />
    </>
  ),
  simulate: (
    <>
      <path d="M10 1l3 2 6 13-2 3H3l-2-3L8 3z" fill="#d5d5d5" stroke="#a5a5a5" />
      <path d="M10 7l4 8H6z" fill="#fff" stroke="#a5a5a5" strokeWidth="1.400" />
      <circle cx="15.500" cy="15" r="4.200" fill="#bbb" />
      <path d="M14 12.500v5l4-2.500z" fill="#fff" />
    </>
  ),
  pause: <path d="M3 3h5v14H3zM12 3h5v14h-5z" fill="#a9a9a9" />,
  stop: (
    <>
      <path d="M0 3h20v14H0z" fill="#cfcfcf" />
      <path d="M0 5h7c4 0 6 2 6 5s-2 5-6 5H0c5-1 6-3 6-5S5 6 0 5z" fill="#a3a3a3" />
    </>
  ),
  // status bar
  panel: (
    <>
      <path d="M1 1h18v14H1z" fill="#fff" stroke="#999" />
      <path d="M1 4.500h18" stroke="#999" />
      <rect x="1" y="6" width="6" height="13" fill="#e3f6fd" stroke={teal} strokeWidth="1.500" />
      <path d="M9 16.500c2.500-4 8.500-4 11 0-2.500 3.500-8.500 3.500-11 0z" fill="#ccc" stroke="#444" strokeWidth="1.200" />
      <circle cx="14.500" cy="16.500" r="2" fill="#444" />
    </>
  ),
  globe: (
    <>
      <circle cx="10" cy="10" r="8.500" fill="url(#deep)" />
      <path d="M4 6c3-3 6-1 5 2s-4 2-5 5M13 4c3 2 4 5 2 8s-4 2-4 5" fill="none" stroke="#b5e4f7" strokeWidth="2" />
      <ellipse cx="10" cy="10" rx="12.500" ry="5" transform="rotate(-45 10 10)" fill="none" stroke="#666" strokeWidth="1.400" />
    </>
  ),
  square: <rect x="1" y="1" width="18" height="18" fill="url(#paper)" stroke="#2c7fa3" strokeWidth="1.500" />,
  find: (
    <>
      <path d="M5 1h4v3H5zM11 1h4v3h-4zM4 4h5l1 2 1-2h5l4 10v5h-7v-6H7v6H0v-5z" fill="#4b4b4b" />
      <path d="M5 5l-3 9v4h2v-4l2-9zM14 5l2 9v4h1v-4l-2-9z" fill="#a5a5a5" />
    </>
  ),
  box: <rect x="1" y="4" width="18" height="12" fill="none" stroke="#555" strokeWidth="1.400" strokeDasharray="4 2.500" />,
  picked: (
    <>
      <rect x="1" y="1" width="18" height="18" fill="#cdf1fd" stroke={teal} strokeWidth="1.600" strokeDasharray="3 2" />
      <path d="M2 5.500c3-4 8-4 11 0-3 4-8 4-11 0z" fill="#ccc" stroke="#444" strokeWidth="1.200" />
      <circle cx="7.500" cy="5.500" r="2" fill="#444" />
      <path d="M12 9l7 9-3.500 0-3.500 2z" fill="#fff" stroke="#444" strokeWidth="1.200" />
    </>
  ),
  // large ribbon icons, drawn on the same 20 unit grid
  regenerate: (
    <>
      <Cube x={0.500} y={0} s={5.500} />
      <Cube x={0.500} y={7.200} s={5.500} />
      <Cube x={0.500} y={14.400} s={5.500} />
      <g transform="translate(9 0) scale(.48)">{cycle}</g>
      <path d="M7.500 13.200h12M7.500 15.900h12M7.500 18.600h11" stroke="#8f8f8f" strokeWidth=".8" />
    </>
  ),
  bigPlane: <path d="M6 3.200h13.200L14 16H.800z" fill="none" stroke={gold} strokeWidth="1.200" />,
  sketch: (
    <>
      <path d="M2 2h16.500M2 7.300h16.500M2 12.600h16.500M2 17.900h16.500" stroke="#555" strokeWidth=".6" strokeDasharray=".6 4.600" />
      <path d="M2 8C4 3 7.500 3 9 7.500s2.500 9 5.500 8.500S18 13.500 18.800 11.500" fill="none" stroke="#35a9de" strokeWidth="1.200" />
    </>
  ),
  extrude: extrudeShape,
  pattern: (
    <>
      <path d="M.500 3l3-2.500h16v16l-3 3z" fill="#a48fc4" stroke="#b0a4c4" strokeWidth=".4" />
      <path d="M.500 3l3-2.500h16L16.500 3z" fill="#d5cbe8" />
      <rect x=".5" y="3" width="16" height="16.500" fill="#f3f1f8" stroke="#a9a9b5" strokeWidth=".5" />
      <path d="M3 5.500h2.300v2.300H3zM7.500 5.500h2.300v2.300H7.500zM12 5.500h2.300v2.300H12zM3 10h2.300v2.300H3zM7.500 10h2.300v2.300H7.500zM12 10h2.300v2.300H12zM3 14.500h2.300v2.300H3zM7.500 14.500h2.300v2.300H7.500zM12 14.500h2.300v2.300H12z" fill="#7149a8" />
    </>
  ),
  boundary: (
    <>
      <path d="M7 1c4-.500 8 .500 12.500 4-2.500 4-4 9-5 14C10 16 5 15 .500 16 .500 10 3 4 7 1z" fill="url(#blue)" />
      <path d="M7 1C3 4 .500 10 .500 16M7 1c4-.500 8 .500 12.500 4M.500 16c4.500-1 9.500 0 14 3M2 7.500c5-2 10-1 15 3" fill="none" stroke="#8d8d8d" strokeWidth=".7" />
      <path d="M13.500 2C10 5 7.500 10 7.500 16M19.500 5c-2.500 4-4 9-5 14" fill="none" stroke="#2c7fa3" strokeWidth=".9" />
    </>
  ),
  interface: (
    <>
      <path d="M.500.500h19v19H.500z" fill="#fdebca" stroke="#c39a50" strokeWidth=".7" />
      <path d="M5.500.500h14v14.300h-4.300c0-1.600 2.600-1.500 2.600-3.400 0-2.800-6.600-2.800-6.600 0 0 1.900 2.200 1.800 2.200 3.400H5.500V9.500c1.500 0 1.500 1.200 3 1.200 2.600 0 2.600-7.500 0-7.500-1.500 0-1.500 1.300-3 1.300z" fill="#cdf3fd" stroke="#3b91b7" strokeWidth=".7" />
    </>
  ),
};

function Icon({ name, big = false }: { name: string; big?: boolean }) {
  return (
    <svg
      viewBox="0 0 20 20"
      className={big ? "h-[38px] w-[38px] shrink-0 overflow-visible" : "h-5 w-5 shrink-0 overflow-visible"}
      aria-hidden="true"
    >
      {icons[name]}
    </svg>
  );
}

function Caret({ faded = false }: { faded?: boolean }) {
  return (
    <svg viewBox="0 0 9 5" className="h-[5px] w-[9px] shrink-0" aria-hidden="true">
      <path d="M0 0h9L4.500 5z" fill={faded ? "#a9a9a9" : "#555"} />
    </svg>
  );
}

/* ---------- title bar ---------- */

function IconButton({ name, label }: { name: string; label: string }) {
  return (
    <button aria-label={label} className="shrink-0">
      <Icon name={name} />
    </button>
  );
}

function TitleBar() {
  return (
    <header className="grid h-[35px] grid-cols-[1fr_auto_1fr] items-center bg-[#fbfbfb]">
      <div className="flex items-center">
        <div className="flex w-[109px] items-center gap-1 pl-[10px]">
          <Icon name="part" />
          <span className="font-['Lato'] text-[25px] leading-8 text-[#505050]">creo</span>
        </div>
        <IconButton name="new" label="New" />
        <div className="ml-2 flex items-center gap-3">
          <IconButton name="open" label="Open" />
          <IconButton name="save" label="Save" />
        </div>
        <button aria-label="Undo" className="ml-[10px] flex items-center gap-2">
          <Icon name="undo" />
          <Caret />
        </button>
        <button aria-label="Redo" disabled className="ml-[10px] flex items-center gap-2">
          <Icon name="redo" />
          <Caret faded />
        </button>
        <div className="ml-[9px] flex items-center gap-[11px]">
          <IconButton name="regenSmall" label="Regenerate model" />
          <button aria-label="Windows" className="flex items-center gap-2">
            <Icon name="windows" />
            <Caret />
          </button>
          <IconButton name="closeWin" label="Close window" />
        </div>
        <span className="ml-[5px] h-[30px] w-px bg-[#d0d4d6]" />
        <button aria-label="Customize toolbar" className="ml-[10px]">
          <svg viewBox="0 0 11 9" className="h-[9px] w-[11px]" aria-hidden="true">
            <path d="M0 0h11v1.500H0zM0 3h11L5.500 9z" fill="#444" />
          </svg>
        </button>
      </div>
      <h1 className="text-[16px] text-[#3f4649]">PROJECT_WRAP (Active) - Creo Parametric</h1>
      <div className="flex items-center justify-end gap-5 pr-[14px]">
        <button aria-label="Minimize">
          <svg viewBox="0 0 14 14" className="h-[14px] w-[14px]" aria-hidden="true">
            <path d="M2 9h11v2.500H2z" fill="#666" />
          </svg>
        </button>
        <button aria-label="Restore">
          <svg viewBox="0 0 14 14" className="h-[14px] w-[14px]" aria-hidden="true">
            <path d="M4 5V1.500h9V8h-3M1 5.500h9V12H1z" fill="none" stroke="#666" strokeWidth="1.500" />
            <path d="M4 1.500h9M1 5.500h9" stroke="#666" strokeWidth="2" />
          </svg>
        </button>
        <button aria-label="Close">
          <svg viewBox="0 0 14 14" className="h-[14px] w-[14px]" aria-hidden="true">
            <path d="M2 2l10 10M12 2L2 12" stroke="#666" strokeWidth="2.400" />
          </svg>
        </button>
      </div>
    </header>
  );
}

const tabs = ["Analysis", "Live Simulation", "Annotate", "Tools", "View", "Flexible Modeling", "Applications"];

function TabBar() {
  return (
    <nav className="flex h-[34px] bg-[#3e4649] text-[15px] text-[#f2f2f2]">
      <button className="w-[74px] bg-linear-to-b from-[#66d044] to-[#4fa634] text-white">File</button>
      <button className="w-[106px] bg-white pr-[2px] text-[#3f8a25]">Model</button>
      <div className="flex gap-[60px] pl-[29px]">
        {tabs.map((tab) => (
          <button key={tab}>{tab}</button>
        ))}
      </div>
      <div className="ml-auto flex items-center gap-[14px] pr-[10px] pb-1">
        <button aria-label="Collapse ribbon">
          <svg viewBox="0 0 14 14" className="h-[14px] w-[14px]" aria-hidden="true">
            <path d="M6.500 2l6.500 7.500H9L6.500 7.500 4 9.500H0z" fill="#fff" />
          </svg>
        </button>
        <button aria-label="Search commands">
          <svg viewBox="0 0 14 14" className="h-[14px] w-[14px]" aria-hidden="true">
            <circle cx="7.500" cy="6" r="3.800" fill="none" stroke="#eee" strokeWidth="1.800" />
            <path d="M5 8.500l-4 4" stroke="#eee" strokeWidth="2.400" />
          </svg>
        </button>
        <button aria-label="Learning" className="flex items-center gap-[10px]">
          <svg viewBox="0 0 16 14" className="h-[14px] w-4" aria-hidden="true">
            <path d="M8 1l8 3.500L8 8 0 4.500z" fill="#eee" />
            <path d="M3 7.500L8 10l5-2.500V11l-5 3-5-3zM1 5v6" fill="#eee" stroke="#3e4649" strokeWidth=".6" />
          </svg>
          <svg viewBox="0 0 9 6" className="h-[6px] w-[9px]" aria-hidden="true">
            <path d="M0 0h9L4.500 6z" fill="#fff" />
          </svg>
        </button>
        <button className="w-[11px] text-[18px] leading-4 font-bold" aria-label="Help">
          ?
        </button>
      </div>
    </nav>
  );
}

/* ---------- ribbon ---------- */

type CommandProps = { icon: string; label: string; menu?: boolean; disabled?: boolean };

function Command({ icon, label, menu, disabled }: CommandProps) {
  return (
    <button
      disabled={disabled}
      className="flex h-[33px] items-center gap-[6px] whitespace-nowrap disabled:text-[#b3b3b3]"
    >
      <Icon name={icon} />
      <span>{label}</span>
      {menu && (
        <span className="pl-1">
          <Caret faded={disabled} />
        </span>
      )}
    </button>
  );
}

function Column({ items, className = "" }: { items: CommandProps[]; className?: string }) {
  return (
    <div className={`flex shrink-0 flex-col items-start pt-px ${className}`}>
      {items.map((item) => (
        <Command key={item.label} {...item} />
      ))}
    </div>
  );
}

function BigCommand({ icon, lines, menu, className }: { icon: string; lines: string[]; menu?: boolean; className: string }) {
  return (
    <button className={`flex shrink-0 flex-col items-center self-start pt-2 leading-[19px] ${className}`}>
      <Icon name={icon} big />
      <span className="mt-3">
        {lines.map((line) => (
          <span key={line} className="block">
            {line}
          </span>
        ))}
      </span>
      {menu && (
        <span className="flex h-[19px] items-center">
          <Caret />
        </span>
      )}
    </button>
  );
}

function Group({ title, className, children }: { title: string; className: string; children: ReactNode }) {
  return (
    <section className={`my-[2px] flex shrink-0 flex-col border-r border-[#c5cbcb] ${className}`} aria-label={title}>
      <div className="-mt-[2px] flex h-[103px]">{children}</div>
      <button className="flex flex-1 items-center justify-center gap-[5px]">
        {title}
        <Caret />
      </button>
    </section>
  );
}

function Ribbon() {
  return (
    <div className="flex h-[133px] border-b border-[#c5d0cf] bg-white text-[#444]">
      <Group title="Operations" className="w-[140px]">
        <BigCommand icon="regenerate" lines={["Regenerate"]} menu className="w-[92px]" />
        <div className="flex flex-col pt-px">
          <button aria-label="Copy" className="flex h-[33px] items-center">
            <Icon name="copy" />
          </button>
          <button aria-label="Paste" disabled className="flex h-[33px] items-center gap-[9px]">
            <Icon name="paste" />
            <Caret faded />
          </button>
          <button aria-label="Delete" className="flex h-[33px] items-center gap-[9px]">
            <Icon name="delete" />
            <Caret />
          </button>
        </div>
      </Group>
      <Group title="Get Data" className="w-[182px]">
        <Column
          className="pl-2"
          items={[
            { icon: "udf", label: "User-Defined Feature" },
            { icon: "copyGeom", label: "Copy Geometry" },
            { icon: "shrinkwrap", label: "Shrinkwrap" },
          ]}
        />
      </Group>
      <Group title="Body" className="w-[174px]">
        <Column
          className="pl-2"
          items={[
            { icon: "boolean", label: "Boolean Operations" },
            { icon: "splitBody", label: "Split/Trim Body" },
            { icon: "newBody", label: "New Body" },
          ]}
        />
      </Group>
      <Group title="Datum" className="w-[272px]">
        <BigCommand icon="bigPlane" lines={["Plane"]} className="w-[58px]" />
        <Column
          className="w-[155px]"
          items={[
            { icon: "axis", label: "Axis" },
            { icon: "point", label: "Point", menu: true },
            { icon: "csys", label: "Coordinate System" },
          ]}
        />
        <BigCommand icon="sketch" lines={["Sketch"]} className="w-[56px]" />
      </Group>
      <Group title="Shapes" className="w-[185px]">
        <BigCommand icon="extrude" lines={["Extrude"]} className="w-[68px]" />
        <Column
          items={[
            { icon: "revolve", label: "Revolve" },
            { icon: "sweep", label: "Sweep", menu: true },
            { icon: "sweptBlend", label: "Swept Blend" },
          ]}
        />
      </Group>
      <Group title="Engineering" className="w-[204px]">
        <Column
          className="w-[118px] pl-2"
          items={[
            { icon: "hole", label: "Hole", disabled: true },
            { icon: "round", label: "Round", menu: true },
            { icon: "chamfer", label: "Chamfer", menu: true },
          ]}
        />
        <Column
          items={[
            { icon: "draft", label: "Draft", menu: true },
            { icon: "shell", label: "Shell", disabled: true },
            { icon: "rib", label: "Rib", menu: true, disabled: true },
          ]}
        />
      </Group>
      <Group title="Editing" className="w-[450px]">
        <BigCommand icon="pattern" lines={["Pattern"]} menu className="w-[66px]" />
        <Column
          className="w-[77px]"
          items={[
            { icon: "mirror", label: "Mirror" },
            { icon: "trim", label: "Trim" },
            { icon: "merge", label: "Merge" },
          ]}
        />
        <Column
          className="w-[91px]"
          items={[
            { icon: "extend", label: "Extend" },
            { icon: "offset", label: "Offset" },
            { icon: "intersect", label: "Intersect" },
          ]}
        />
        <Column
          className="w-[87px]"
          items={[
            { icon: "project", label: "Project" },
            { icon: "thicken", label: "Thicken" },
            { icon: "solidify", label: "Solidify" },
          ]}
        />
        <Column
          items={[
            { icon: "remove", label: "Remove" },
            { icon: "split", label: "Split", menu: true },
            { icon: "unify", label: "Unify Surfaces" },
          ]}
        />
      </Group>
      <Group title="Surfaces" className="w-[175px]">
        <BigCommand icon="boundary" lines={["Boundary", "Blend"]} className="w-[82px]" />
        <Column
          items={[
            { icon: "fill", label: "Fill" },
            { icon: "style", label: "Style" },
            { icon: "freestyle", label: "Freestyle" },
          ]}
        />
      </Group>
      <Group title="Model Intent" className="w-[113px]">
        <BigCommand icon="interface" lines={["Component", "Interface"]} className="w-full" />
      </Group>
    </div>
  );
}

/* ---------- model tree ---------- */

type TreeItem = { label: string; icon: string; faded?: boolean; parent?: boolean; selected?: boolean };

const treeItems: TreeItem[] = [
  { label: "Design Items", icon: "design", parent: true },
  { label: "RIGHT", icon: "planeFaded", faded: true },
  { label: "TOP", icon: "planeFaded", faded: true },
  { label: "FRONT", icon: "planeFaded", faded: true },
  { label: "PRT_CSYS_DEF", icon: "csys" },
  { label: "Sketch 2", icon: "sketchFaded", faded: true },
  { label: "Extrude 2", icon: "extrudeSmall", parent: true },
  { label: "DTM1", icon: "planeFaded", faded: true },
  { label: "PROJ_CURVE", icon: "sketchFaded", faded: true },
  { label: "WRAP_CURVE", icon: "sketchFaded", faded: true },
  { label: "A_1", icon: "axis" },
  { label: "DTM2", icon: "plane" },
  { label: "Project 1", icon: "project", parent: true },
  { label: "Wrap 1", icon: "wrap", parent: true, selected: true },
];

function TreeRow({ label, icon, faded, parent, selected }: TreeItem) {
  return (
    <li className="flex items-center pl-[21px]">
      <span className="flex h-full w-[18px] flex-col">
        <span className="ml-[3px] flex-1 border-l border-[#ccc]" />
        {parent ? (
          <button aria-label={`Expand ${label}`} className="h-[11px] w-[6px]">
            <svg viewBox="0 0 6 10" className="h-[11px] w-[6px]" aria-hidden="true">
              <path d="M0 0v10l6-5z" fill="#555" />
            </svg>
          </button>
        ) : (
          <span className="ml-[3px] h-px w-[11px] bg-[#ccc]" />
        )}
        <span className={`ml-[3px] flex-1 ${selected ? "" : "border-l border-[#ccc]"}`} />
      </span>
      <Icon name={icon} />
      <span
        className={`ml-1 px-[2px] leading-[21px] whitespace-nowrap ${faded ? "text-[#bdb199]" : "text-[#444]"} ${selected ? "bg-[#b0e2fd] pr-1" : ""}`}
      >
        {label}
      </span>
    </li>
  );
}

function Separator() {
  return <span className="h-[30px] w-px shrink-0 bg-[#c9cdcd]" />;
}

function ModelTree() {
  return (
    <aside className="flex w-[457px] shrink-0 flex-col border-r-[3px] border-[#e6eaea]">
      <div className="flex h-[33px] bg-[#e6eaea]">
        <button aria-label="Model tree" className="flex w-10 items-center justify-center bg-white">
          <Icon name="tree" />
        </button>
        <button aria-label="Folder browser" className="flex w-[38px] items-center justify-center">
          <Icon name="folders" />
        </button>
      </div>
      <div className="flex h-10 items-center pr-[10px] pl-[13px]">
        <IconButton name="greenCube" label="Part" />
        <span className="ml-[7px] h-[19px] border-l-[3px] border-dotted border-[#aaa]" />
        <div className="ml-[23px] flex items-center gap-[10px]">
          <IconButton name="levels" label="Expand all" />
          <IconButton name="flat" label="Collapse all" />
        </div>
        <button
          aria-label="Show columns"
          className="ml-[5px] flex h-[30px] w-[30px] items-center justify-center border border-[#b5b8b8] bg-[#dcdede]"
        >
          <Icon name="columns" />
        </button>
        <span className="ml-[5px] flex items-center gap-[10px]">
          <Separator />
          <IconButton name="newFolder" label="New group" />
          <Separator />
          <IconButton name="treeFilter" label="Tree filters" />
          <IconButton name="treeColumns" label="Tree columns" />
          <Separator />
        </span>
        <span className="ml-[11px] flex items-center gap-[10px]">
          <IconButton name="design" label="Design items" />
          <IconButton name="layers" label="Layers" />
          <IconButton name="treeSelect" label="Select in tree" />
          <IconButton name="treeBody" label="Bodies" />
        </span>
        <span className="ml-auto flex">
          <IconButton name="report" label="Tree report" />
        </span>
      </div>
      <div className="flex h-[34px] items-center pr-[15px] pl-[15px]">
        <Icon name="funnel" />
        <div className="ml-[5px] flex h-[34px] flex-1 items-center border border-[#b5c1c1]">
          <input aria-label="Filter tree" className="h-full min-w-0 flex-1 px-2 text-[13px] outline-none" />
          <button aria-label="Clear filter" className="px-[6px]">
            <svg viewBox="0 0 12 12" className="h-3 w-3" aria-hidden="true">
              <path d="M1 1l10 10M11 1L1 11" stroke="#999" strokeWidth="1.600" />
            </svg>
          </button>
        </div>
        <button aria-label="Filter options" className="ml-[7px]">
          <Caret />
        </button>
        <button aria-label="Add filter" className="ml-[15px]">
          <svg viewBox="0 0 14 14" className="h-[14px] w-[14px]" aria-hidden="true">
            <path d="M7 0v14M0 7h14" stroke="#999" strokeWidth="4" />
          </svg>
        </button>
      </div>
      <ul className="mt-[6px] grid h-[338px] grid-rows-[repeat(15,minmax(0,1fr))] text-[13px]">
        <li className="flex items-center gap-[7px] pl-[13px] text-[14px] text-[#444]">
          <Icon name="part" />
          PROJECT_WRAP.PRT
        </li>
        {treeItems.map((item) => (
          <TreeRow key={item.label} {...item} />
        ))}
      </ul>
      {/* insert indicator */}
      <div className="mt-1 mr-[6px] ml-[14px] flex h-2 items-center">
        <svg viewBox="0 0 4 8" className="h-2 w-1" aria-hidden="true">
          <path d="M0 0l4 4-4 4z" fill="#5ecb3c" />
        </svg>
        <span className="h-[2px] flex-1 bg-[#5ecb3c]" />
        <svg viewBox="0 0 4 8" className="h-2 w-1" aria-hidden="true">
          <path d="M4 0L0 4l4 4z" fill="#5ecb3c" />
        </svg>
      </div>
    </aside>
  );
}

/* ---------- graphics area ---------- */

const viewTools = [
  ["refit", "Refit"],
  ["zoomIn", "Zoom in"],
  ["zoomOut", "Zoom out"],
  ["repaint", "Repaint"],
  ["render", "Rendering options"],
  ["display", "Display style"],
  ["savedViews", "Saved orientations"],
  ["perspective", "Perspective view"],
  ["section", "Section"],
  ["datumDisplay", "Datum display filters"],
  ["annotation", "Annotation display"],
  ["spin", "Spin center"],
  ["simulate", "Simulate"],
  ["pause", "Pause"],
  ["stop", "Stop"],
];

function GraphicsArea() {
  return (
    <main className="relative flex flex-1 flex-col items-center bg-white">
      <svg viewBox="457 202 1463 836" className="absolute inset-0 h-full w-full" role="img" aria-label="Part model">
        <defs>
          <linearGradient id="surface" gradientUnits="userSpaceOnUse" x1="967" y1="623" x2="1311" y2="851">
            <stop offset="0" stopColor="#413b1f" />
            <stop offset=".06" stopColor="#443e21" />
            <stop offset=".12" stopColor="#464122" />
            <stop offset=".2" stopColor="#403a1e" />
            <stop offset=".27" stopColor="#3b351b" />
            <stop offset=".35" stopColor="#38301b" />
            <stop offset=".445" stopColor="#37301a" />
            <stop offset=".455" stopColor="#323019" />
            <stop offset=".61" stopColor="#323019" />
            <stop offset=".62" stopColor="#37301a" />
            <stop offset=".72" stopColor="#38301b" />
            <stop offset=".79" stopColor="#3d361c" />
            <stop offset=".87" stopColor="#433c20" />
            <stop offset=".94" stopColor="#464122" />
            <stop offset="1" stopColor="#3f391d" />
          </linearGradient>
        </defs>
        <path d={surface} fill="url(#surface)" stroke="#1d1c10" strokeWidth="1" />
        <path d="M1525 530L1298 872" fill="none" stroke="#14140c" strokeWidth="1.600" />
        <path d={smooth(projectedCurve, true)} fill="none" stroke="#1f57d6" strokeWidth="2" />
        <path d={smooth(wrappedCurve, true)} fill="none" stroke="#1aa50d" strokeWidth="2" />
        <path
          d="M818 247v32l8-6 4 9c1 3 6 1 5-2l-4-9 10-1z"
          fill="#f3f3f3"
          stroke="#111"
          strokeWidth="2"
          strokeLinejoin="round"
        />
      </svg>
      <div className="relative mt-[9px] flex h-[40px] w-[494px] items-center justify-between border-2 border-[#bcc8c8] bg-white px-[7px]">
        {viewTools.map(([name, label]) => (
          <IconButton key={name} name={name} label={label} />
        ))}
      </div>
    </main>
  );
}

/* ---------- status bar ---------- */

function StatusBar() {
  return (
    <footer className="flex h-[42px] items-center border-t-2 border-b border-t-[#c8d2d1] border-b-[#e6e6e6] bg-white text-[#444]">
      <button
        aria-label="Toggle navigator"
        className="ml-[7px] flex h-[30px] w-7 items-center justify-center border border-[#b5b8b8] bg-[#dcdede]"
      >
        <Icon name="panel" />
      </button>
      <div className="ml-[9px] flex gap-3">
        <IconButton name="globe" label="Toggle browser" />
        <IconButton name="square" label="Full screen" />
      </div>
      <span className="ml-[15px] h-[30px] w-px bg-[#ccc]" />
      <p className="ml-[7px] flex items-center gap-[6px]" role="status">
        <span className="h-[7px] w-[7px] rounded-full bg-[#1c6a8c]" />
        Feature redefined successfully.
      </p>
      <div className="ml-auto flex items-center">
        <span className="h-8 w-[7px] border-x border-[#ccc]" />
        <button aria-label="Find" className="ml-[7px] flex items-center gap-[9px]">
          <Icon name="find" />
          <Caret />
        </button>
        <span className="ml-2 h-8 w-px bg-[#ccc]" />
        <button aria-label="Selection box" className="ml-[7px] flex items-center gap-[10px]">
          <Icon name="box" />
          <Caret />
        </button>
        <button className="ml-[11px] flex items-center gap-[11px]">
          <Icon name="picked" />
          1 selected
        </button>
        <div className="relative mr-[23px] ml-[41px] flex items-center">
          <select
            aria-label="Selection filter"
            className="h-[29px] w-[206px] appearance-none border border-[#b0b5b5] bg-[#f6f6f6] pl-[9px] leading-[27px]"
          >
            <option>Geometry</option>
          </select>
          <span className="pointer-events-none absolute right-0 flex h-[29px] w-[20px] items-center justify-center border-l border-[#b0b5b5]">
            <Caret />
          </span>
        </div>
      </div>
    </footer>
  );
}

export default function App() {
  return (
    <div className="flex h-screen flex-col overflow-hidden bg-white font-['Noto_Sans',sans-serif] text-[14px]">
      <Gradients />
      <TitleBar />
      <TabBar />
      <Ribbon />
      <div className="flex min-h-0 flex-1">
        <ModelTree />
        <GraphicsArea />
      </div>
      <StatusBar />
    </div>
  );
}
